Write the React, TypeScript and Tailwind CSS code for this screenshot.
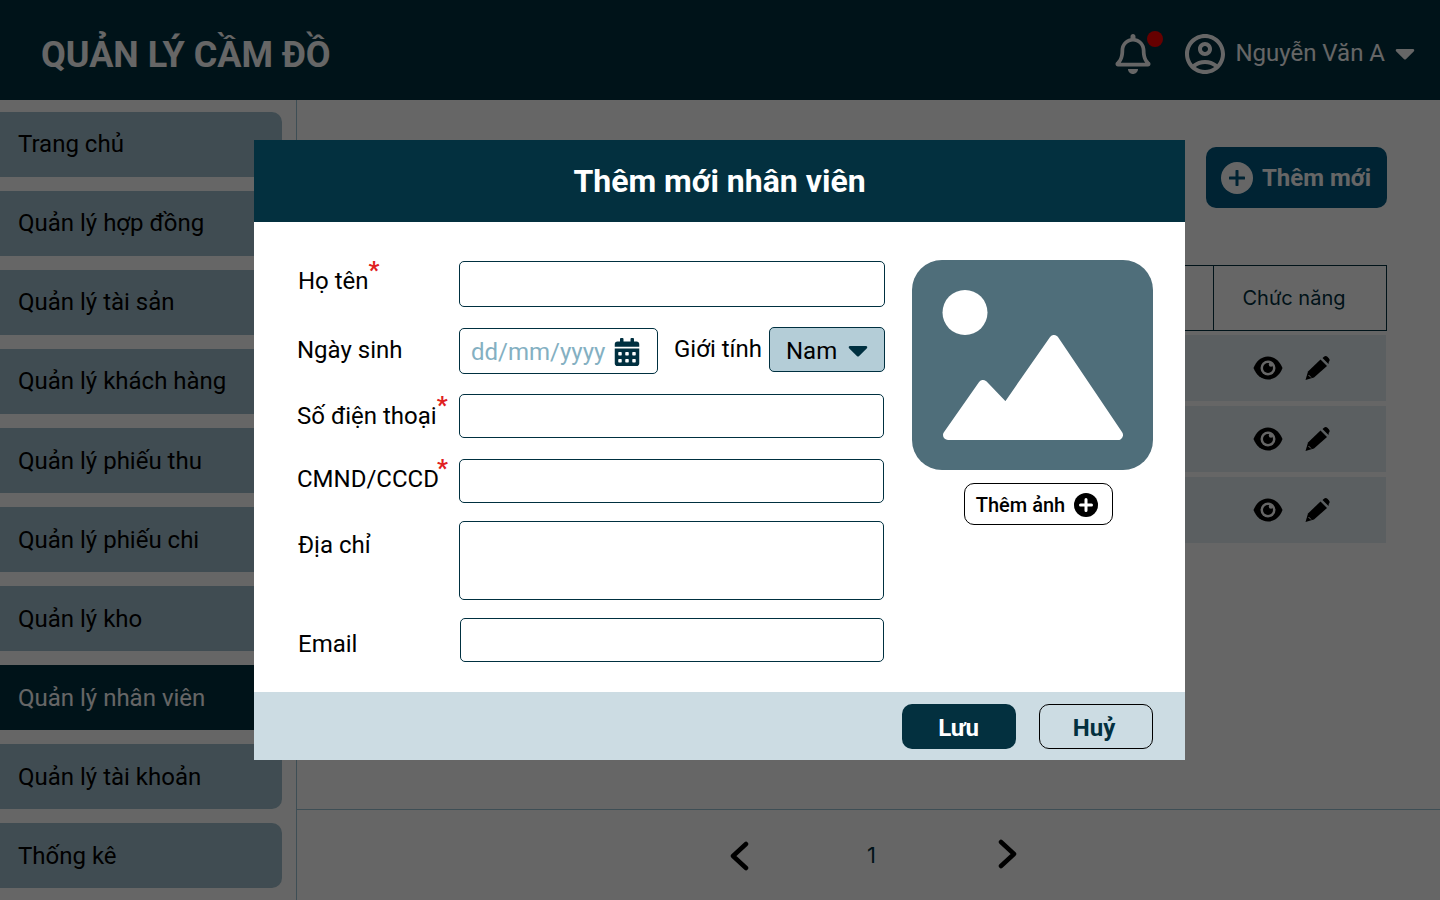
import React from 'react';
import { FaCalendarAlt, FaCaretDown, FaRegBell } from 'react-icons/fa';
import { MdOutlineAccountCircle } from 'react-icons/md';

const menu = [
  'Trang chủ',
  'Quản lý hợp đồng',
  'Quản lý tài sản',
  'Quản lý khách hàng',
  'Quản lý phiếu thu',
  'Quản lý phiếu chi',
  'Quản lý kho',
  'Quản lý nhân viên',
  'Quản lý tài khoản',
  'Thống kê',
];

const EyeIcon = () => (
  <svg width="30" height="24" viewBox="0 0 30 24">
    <path d="M15 .5C8 .5 3 5.500 .5 12 3 18.500 8 23.500 15 23.500S27 18.500 29.500 12C27 5.500 22 .5 15 .5Z" fill="#000" />
    <circle cx="15" cy="12" r="7.500" fill="#fff" />
    <circle cx="15" cy="12" r="5" fill="#000" />
    <circle cx="18" cy="8.500" r="2.200" fill="#fff" />
  </svg>
);

const PencilIcon = () => (
  <svg width="26" height="26" viewBox="0 0 26 26">
    <path d="M1.500 25 4 16.500 16.500 4.500 23 11 10 22.500Z" fill="#000" />
    <path d="M18.500 3 20 1.700a2.500 2.500 0 0 1 3.400 0l1.400 1.500a2.500 2.500 0 0 1 0 3.500L24.500 9Z" fill="#000" />
    <path d="M4.500 20 7 22.500" stroke="#fff" strokeWidth="1" />
  </svg>
);

const Req = ({ className = '' }: { className?: string }) => (
  <sup className={`top-[-11px] text-[24px] font-bold leading-none text-[#e02020] ${className}`}>*</sup>
);

export default function App() {
  return (
    <div className="relative flex h-[900px] w-full flex-col overflow-hidden bg-white font-['Roboto',sans-serif] text-black">
      <header className="flex h-[100px] shrink-0 items-center bg-[#003040] pl-[41px] pr-[25px] pt-2 text-white">
        <h1 className="mt-[2px] text-[36px] font-bold leading-none">QUẢN LÝ CẦM ĐỒ</h1>
        <div className="relative ml-auto mr-[30px] h-10 w-9">
          <FaRegBell size={40} className="-ml-[2px]" />
          <span className="absolute -right-[12px] -top-[3px] h-4 w-4 rounded-full bg-[#ff0000]" />
        </div>
        <MdOutlineAccountCircle size={48} className="mr-[6px]" />
        <span className="-mt-[2px] text-[24px] leading-none">Nguyễn Văn A</span>
        <FaCaretDown size={32} className="-mr-[6px] -mt-[3px] ml-[4px]" />
      </header>

      <div className="flex flex-1">
        <aside className="flex w-[297px] shrink-0 flex-col gap-[14px] border-r border-[#9cc3d4] pr-[14px] pt-3">
          {menu.map((item, i) => (
            <div
              key={item}
              className={`flex h-[65px] items-center rounded-r-[10px] pl-[18px] text-[24px] ${i < 4 ? 'pb-[2px]' : ''} ${i === 7 ? 'bg-[#003040] text-white' : 'bg-[#a0bfcd]'}`}
            >
              {item}
            </div>
          ))}
        </aside>

        <main className="flex flex-1 flex-col">
          <div className="flex h-[709px] flex-col items-end pr-[53px] pt-[47px]">
            <button className="flex h-[61px] w-[181px] items-center gap-[9px] rounded-[10px] bg-[#005880] pl-[15px] text-[24px] font-bold text-white">
              <span className="flex h-8 w-8 items-center justify-center rounded-full bg-white">
                <svg width="16" height="16" viewBox="0 0 16 16"><path d="M8 1v14M1 8h14" stroke="#005880" strokeWidth="3" strokeLinecap="round" /></svg>
              </span>
              Thêm mới
            </button>
            <div className="mt-[57px] flex h-[66px] w-[1047px] border border-[#003040] font-['Inter',sans-serif] text-[20px] text-[#003040]">
              <div className="flex-1" />
              <div className="flex w-[173px] items-center justify-center border-l border-[#003040] pr-[12px]">Chức năng</div>
            </div>
            <div className="mt-[4px] flex w-[1047px] flex-col gap-[5px] pr-px">
              {[0, 1, 2].map(i => (
                <div key={i} className="flex h-[66px] items-center justify-end bg-[#e4eef3] pr-[56px]">
                  <EyeIcon />
                  <span className="ml-[21px]"><PencilIcon /></span>
                </div>
              ))}
            </div>
          </div>
          <div className="flex flex-1 items-center border-t border-[#9cc3d4] pl-[433px]">
            <svg width="20" height="30" viewBox="0 0 20 30" className="mt-[2px]">
              <path d="M16 3 3 15l13 12" fill="none" stroke="#000" strokeWidth="4.500" strokeLinecap="round" strokeLinejoin="round" />
            </svg>
            <span className="ml-[117px] w-[15px] font-['Inter',sans-serif] text-[22px] text-[#003040]">1</span>
            <svg width="20" height="30" viewBox="0 0 20 30" className="-mt-[2px] ml-[115px]">
              <path d="M4 3l13 12L4 27" fill="none" stroke="#000" strokeWidth="4.500" strokeLinecap="round" strokeLinejoin="round" />
            </svg>
          </div>
        </main>
      </div>

      {/* overlay + dialog */}
      <div className="absolute inset-0 flex items-center justify-center bg-black/60 pr-px">
        <div className="flex h-[620px] w-[931px] flex-col bg-white">
          <div className="flex h-[82px] shrink-0 items-center justify-center bg-[#03303f] text-[32px] font-bold text-white">
            Thêm mới nhân viên
          </div>

          <div className="flex flex-1 pl-[43px] text-[24px] leading-[28px]">
            <div className="w-[615px] shrink-0 pt-[39px]">
              <div className="flex items-start">
                <div className="ml-px w-[161px] shrink-0 pt-[6px]">Họ tên<Req /></div>
                <div className="h-[46px] w-[426px] rounded-[5px] border border-[#003040]" />
              </div>

              <div className="mt-[21px] flex items-start">
                <div className="w-[162px] shrink-0 pt-[8px]">Ngày sinh</div>
                <div className="flex h-[46px] w-[199px] items-center rounded-[5px] border border-[#003040] pl-[11px] pt-[2px] text-[#84b0c2]">
                  dd/mm/yyyy
                  <FaCalendarAlt size={28} className="ml-[8px] text-[#003040]" />
                </div>
                <div className="ml-[16px] w-[95px] shrink-0 pt-[7px]">Giới tính</div>
                <div className="-mt-px flex h-[45px] w-[116px] items-center rounded-[5px] border border-[#003040] bg-[#b4cdd7] pl-[16px] pt-[2px]">
                  Nam
                  <FaCaretDown size={32} className="-mt-[2px] ml-[5px] text-[#003040]" />
                </div>
              </div>

              <div className="mt-[20px] flex items-start">
                <div className="w-[162px] shrink-0 whitespace-nowrap pt-[8px]">Số điện thoại<Req /></div>
                <div className="h-[44px] w-[425px] rounded-[5px] border border-[#003040]" />
              </div>
              <div className="mt-[21px] flex items-start">
                <div className="w-[162px] shrink-0 whitespace-nowrap pt-[6px]">CMND/CCCD<Req className="-ml-[2px]" /></div>
                <div className="h-[44px] w-[425px] rounded-[5px] border border-[#003040]" />
              </div>
              <div className="mt-[18px] flex items-start">
                <div className="ml-px w-[161px] shrink-0 pt-[10px]">Địa chỉ</div>
                <div className="h-[79px] w-[425px] rounded-[5px] border border-[#003040]" />
              </div>
              <div className="mt-[18px] flex items-start">
                <div className="ml-px w-[162px] shrink-0 pt-[12px]">Email</div>
                <div className="h-[44px] w-[424px] rounded-[5px] border border-[#003040]" />
              </div>
            </div>

            <div className="flex w-[241px] shrink-0 flex-col items-center pt-[38px]">
              <svg width="241" height="210" viewBox="0 0 241 210" className="shrink-0">
                <rect width="241" height="210" rx="30" fill="#4f6e7a" />
                <circle cx="53" cy="52.500" r="22.500" fill="#fff" />
                <path d="M71 125 94 149 142 80 206 175H36Z" fill="#fff" stroke="#fff" strokeWidth="10" strokeLinejoin="round" />
              </svg>
              <button className="ml-[11px] mt-[13px] flex h-[42px] w-[149px] items-center justify-center gap-[9px] rounded-[10px] border border-black pr-[2px] pt-[2px] text-[20px] font-medium leading-none">
                Thêm ảnh
                <svg width="24" height="24" viewBox="0 0 24 24" className="-mt-px">
                  <circle cx="12" cy="12" r="12" fill="#000" />
                  <path d="M12 6.500v11M6.500 12h11" stroke="#fff" strokeWidth="3" strokeLinecap="round" />
                </svg>
              </button>
            </div>
          </div>

          <div className="flex h-[68px] shrink-0 items-center justify-end gap-[23px] bg-[#ccdce3] pr-[32px] text-[24px] font-bold">
            <button className="h-[45px] w-[114px] rounded-[10px] bg-[#03303f] pr-px pt-1 text-white">Lưu</button>
            <button className="mt-px h-[45px] w-[114px] rounded-[10px] border border-black pr-[4px] pt-[2px] text-[#03303f]">Huỷ</button>
          </div>
        </div>
      </div>
    </div>
  );
}
